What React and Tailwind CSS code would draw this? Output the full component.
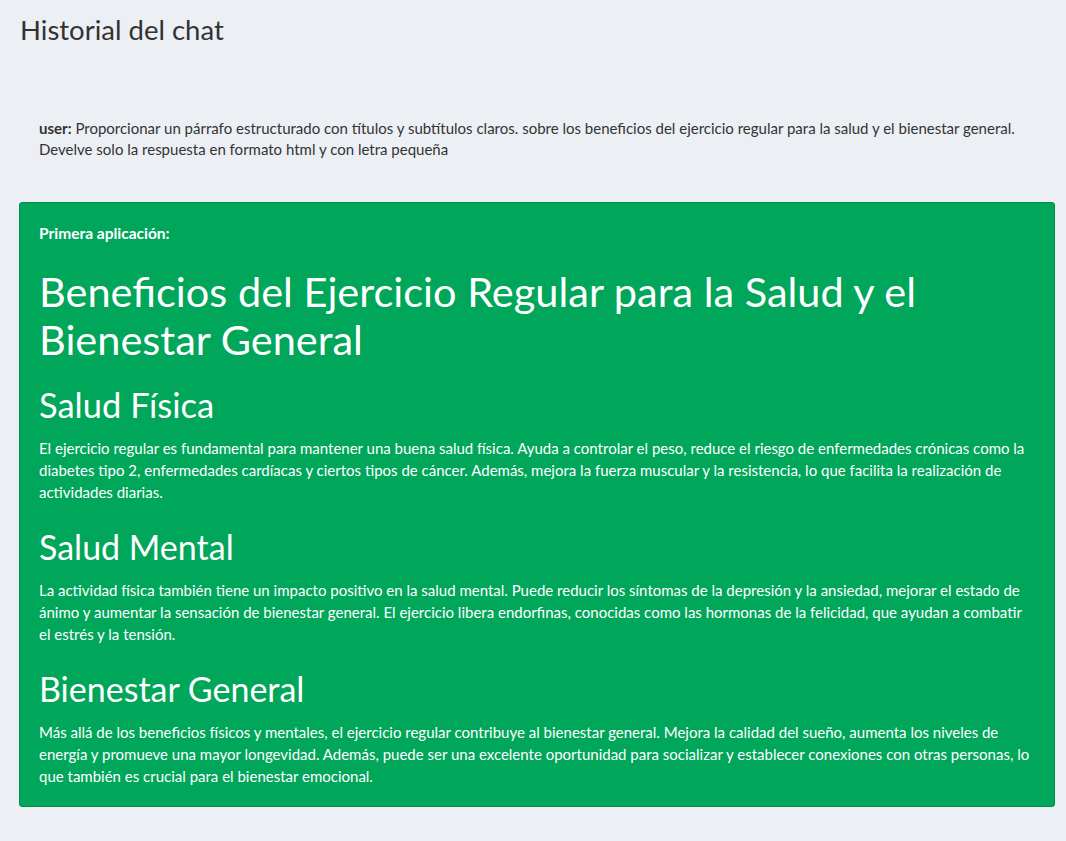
const sections = [
    {
        title: "Salud Física",
        text: "El ejercicio regular es fundamental para mantener una buena salud física. Ayuda a controlar el peso, reduce el riesgo de enfermedades crónicas como la diabetes tipo 2, enfermedades cardíacas y ciertos tipos de cáncer. Además, mejora la fuerza muscular y la resistencia, lo que facilita la realización de actividades diarias.",
    },
    {
        title: "Salud Mental",
        text: "La actividad física también tiene un impacto positivo en la salud mental. Puede reducir los síntomas de la depresión y la ansiedad, mejorar el estado de ánimo y aumentar la sensación de bienestar general. El ejercicio libera endorfinas, conocidas como las hormonas de la felicidad, que ayudan a combatir el estrés y la tensión.",
    },
    {
        title: "Bienestar General",
        text: "Más allá de los beneficios físicos y mentales, el ejercicio regular contribuye al bienestar general. Mejora la calidad del sueño, aumenta los niveles de energía y promueve una mayor longevidad. Además, puede ser una excelente oportunidad para socializar y establecer conexiones con otras personas, lo que también es crucial para el bienestar emocional.",
    },
];

const App = () => {
    return (
        <div className="min-h-[841px] bg-[#ecf0f5] font-['Lato',sans-serif] text-[#333]">
            <div className="pl-[19px] pr-[11px] pt-[12px] pb-[33px]">
                <h1 className="pl-px text-[27.5px] leading-[36px] text-[#333]">Historial del chat</h1>

                <div className="mt-[70px] px-5 text-[15px] leading-[21px]">
                    <span className="font-bold">user:</span>{" "}
                    Proporcionar un párrafo estructurado con títulos y subtítulos claros. sobre los beneficios del ejercicio regular para la salud y el bienestar general. Develve solo la respuesta en formato html y con letra pequeña
                </div>

                <div className="mt-[42px] rounded-[3px] border border-[#008d4c] bg-[#00a65a] px-[19px] pt-[20px] pb-[19px] text-white">
                    <p className="text-[15.5px] font-bold leading-5">Primera aplicación:</p>
                    <h2 className="mt-[24px] text-[41.5px] leading-[48px]">
                        Beneficios del Ejercicio Regular para la Salud y el Bienestar General
                    </h2>
                    {sections.map((s, i) => (
                        <div key={s.title}>
                            <h3 className={i === 0 ? "mt-[20px] text-[34.5px] leading-[44px]" : "mt-[22px] text-[34px] leading-[44px]"}>
                                {s.title}
                            </h3>
                            <p className="mt-[10px] text-[15px] leading-[22px]">{s.text}</p>
                        </div>
                    ))}
                </div>
            </div>
        </div>
    );
};

export default App;
